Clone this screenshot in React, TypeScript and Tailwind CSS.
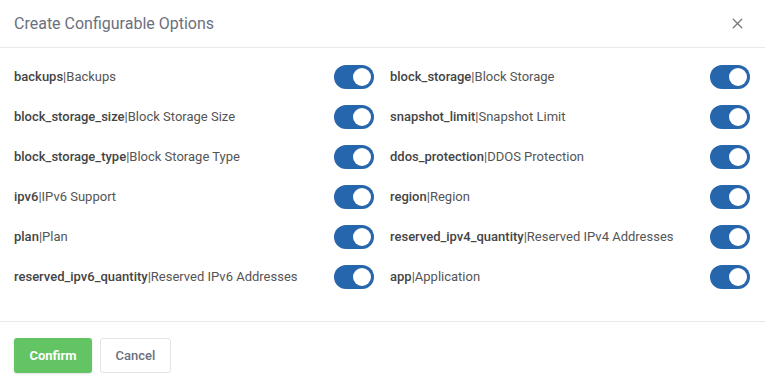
import { X } from 'lucide-react';

const options = [
  ['backups', 'Backups'],
  ['block_storage', 'Block Storage'],
  ['block_storage_size', 'Block Storage Size'],
  ['snapshot_limit', 'Snapshot Limit'],
  ['block_storage_type', 'Block Storage Type'],
  ['ddos_protection', 'DDOS Protection'],
  ['ipv6', 'IPv6 Support'],
  ['region', 'Region'],
  ['plan', 'Plan'],
  ['reserved_ipv4_quantity', 'Reserved IPv4 Addresses'],
  ['reserved_ipv6_quantity', 'Reserved IPv6 Addresses'],
  ['app', 'Application'],
];

function Toggle() {
  return (
    <span className="flex h-[24px] w-[40px] shrink-0 items-center justify-end rounded-full bg-[#2566ac] pr-[3px]">
      <span className="h-[18px] w-[18px] rounded-full bg-white" />
    </span>
  );
}

export default function App() {
  return (
    <div className="h-[387px] w-[765px] bg-white font-['Roboto',sans-serif] text-[#555]">
      <div className="flex h-[48px] items-center justify-between border-b border-[#e8e8ef] pl-[14px] pr-[19px]">
        <h2 className="text-[16px] text-[#6b6f7e]">Create Configurable Options</h2>
        <X className="h-[17px] w-[17px] text-[#777]" strokeWidth={1.8} />
      </div>

      <div className="grid grid-cols-2 gap-x-[16px] pb-[24px] pl-[14px] pr-[15px] pt-[9px]">
        {options.map(([key, label]) => (
          <div key={key} className="flex h-[40px] items-center justify-between">
            <span className="text-[13px]">
              <span className="font-medium text-[#444]">{key}</span>|{label}
            </span>
            <Toggle />
          </div>
        ))}
      </div>

      <div className="flex gap-[8px] border-t border-[#e8e8ef] px-[14px] pt-[16px]">
        <button className="h-[35px] w-[78px] rounded-[3px] bg-[#62c462] text-[13px] font-bold text-white shadow-sm">
          Confirm
        </button>
        <button className="h-[35px] w-[71px] rounded-[3px] border border-[#e3e4ea] bg-white text-[13px] font-medium text-[#6b6f7e]">
          Cancel
        </button>
      </div>
    </div>
  );
}
